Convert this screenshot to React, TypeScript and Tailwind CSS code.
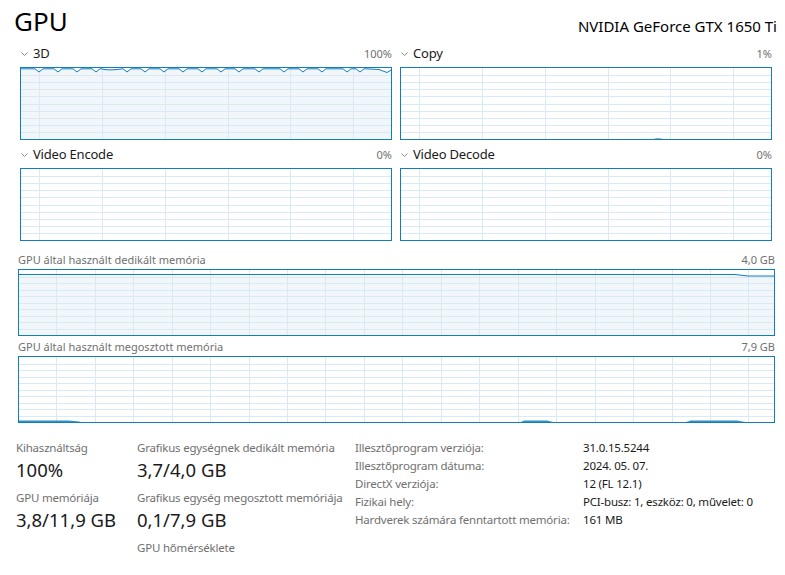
import React from 'react';

const BORDER = '#117dbb';
const GRID = '#d9eaf4';
const FILL = '#f1f6fa';

interface GraphProps {
  width: number;
  height: number;
  cols: number[];
  rows?: number;
  under?: string;
  line?: string;
  area?: string;
}

// inner drawing of a task-manager style graph (fill, grid, data)
const Graph: React.FC<GraphProps> = ({ width, height, cols, rows = 10, under, line, area }) => {
  const w = width - 2;
  const h = height - 2;
  const hLines = Array.from({ length: rows - 1 }, (_, i) => Math.round((h * (i + 1)) / rows) + 0.5);
  return (
    <div className="border border-[#117dbb] bg-white" style={{ width, height }}>
      <svg width={w} height={h} className="block" shapeRendering="crispEdges">
        {under && <path d={under} fill={FILL} shapeRendering="auto" />}
        {hLines.map((y) => (
          <line key={'h' + y} x1={0} x2={w} y1={y} y2={y} stroke={GRID} strokeWidth={1} />
        ))}
        {cols.map((x) => (
          <line key={'v' + x} x1={Math.round(x) + 0.5} x2={Math.round(x) + 0.5} y1={0} y2={h} stroke={GRID} strokeWidth={1} />
        ))}
        {area && <path d={area} fill={BORDER} opacity={0.85} shapeRendering="auto" />}
        {line && <path d={line} fill="none" stroke={BORDER} strokeWidth={1} shapeRendering="auto" />}
      </svg>
    </div>
  );
};

const Chevron = () => (
  <svg width="7" height="4" viewBox="0 0 7 4" className="block">
    <polyline points="0.5,0.5 3.5,3.5 6.5,0.5" fill="none" stroke="#8a8a8a" strokeWidth="1" />
  </svg>
);

const Section: React.FC<{ title: string; value: string; children: React.ReactNode }> = ({ title, value, children }) => (
  <div>
    <div className="flex h-[16px] items-center justify-between">
      <div className="flex items-center">
        <span className="ml-[1px] mr-[5px]">
          <Chevron />
        </span>
        <span className="text-[13px] tracking-[-0.2px] text-[#1a1a1a]">{title}</span>
      </div>
      <span className="text-[11px] text-[#707070]">{value}</span>
    </div>
    <div className="mt-[5px]">{children}</div>
  </div>
);

const smallCols = [18, 81, 144, 207, 269, 332];
const memCols = Array.from({ length: 19 }, (_, i) => 37.3 + i * 38.45);

// 3D usage: pinned near 100% with small dips
const dips = [18, 37, 56, 75, 106, 124, 143, 162, 181, 200, 218, 238, 263, 282, 301, 326, 339];
let zig = 'M0 0.8';
dips.forEach((x) => {
  zig += ` L${x - 4} 0.8 L${x} 4 L${x + 4} 0.8`;
});
zig = zig.replace(`L${106 - 4} 0.8`, 'L80 0.8 Q87 3 ' + (106 - 4) + ' 0.8');
zig += ' L345 0.8 L358 1.5 L366 4.5 L370 2';
const zigFill = zig + ' L370 71 L0 71 Z';

const dedLine = 'M0 4.5 L716 4.5 L729 6 L755 6';
const dedFill = dedLine + ' L755 65 L0 65 Z';

const sharedArea =
  'M0 65 L0 63.6 L50 63.6 L60 64.4 L62 65 Z M502 65 L505 63.6 L528 63.6 L534 65 Z M667 65 L672 63.6 L718 63.6 L726 65 Z';

const copyArea = 'M252 71 Q257 69.5 262 71 Z';

const info: [string, string][] = [
  ['Illesztőprogram verziója:', '31.0.15.5244'],
  ['Illesztőprogram dátuma:', '2024. 05. 07.'],
  ['DirectX verziója:', '12 (FL 12.1)'],
  ['Fizikai hely:', 'PCI-busz: 1, eszköz: 0, művelet: 0'],
  ['Hardverek számára fenntartott memória:', '161 MB'],
];

const Stat: React.FC<{ label: string; value?: string }> = ({ label, value }) => (
  <div className="mb-[6px]">
    <div className="h-[16px] text-[11.5px] leading-[16px] tracking-[-0.2px] text-[#707070] whitespace-nowrap">{label}</div>
    {value && <div className="h-[28px] text-[18.5px] leading-[28px] text-[#1a1a1a] whitespace-nowrap">{value}</div>}
  </div>
);

export default function App() {
  return (
    <div
      className="h-[575px] w-[785px] overflow-hidden bg-white"
      style={{ fontFamily: '"Segoe UI", "Noto Sans", sans-serif' }}
    >
      <div className="flex h-[44px] items-start justify-between pl-[14px] pr-[8px]">
        <div className="mt-[4px] text-[26px] leading-[34px] text-black">GPU</div>
        <div className="mt-[16px] text-[15px] leading-[20px] text-black">NVIDIA GeForce GTX 1650 Ti</div>
      </div>

      <div className="ml-[20px] mt-[2px] grid w-[752px] grid-cols-2 gap-x-[8px] gap-y-[7px]">
        <Section title="3D" value="100%">
          <Graph width={372} height={73} cols={smallCols} under={zigFill} line={zig} />
        </Section>
        <Section title="Copy" value="1%">
          <Graph width={372} height={73} cols={smallCols} area={copyArea} />
        </Section>
        <Section title="Video Encode" value="0%">
          <Graph width={372} height={73} cols={smallCols} />
        </Section>
        <Section title="Video Decode" value="0%">
          <Graph width={372} height={73} cols={smallCols} />
        </Section>
      </div>

      <div className="ml-[18px] mt-[12px] w-[757px]">
        <div className="flex h-[14px] items-center justify-between text-[11px] text-[#707070]">
          <span>GPU által használt dedikált memória</span>
          <span>4,0 GB</span>
        </div>
        <div className="mt-[2px]">
          <Graph width={757} height={67} cols={memCols} under={dedFill} line={dedLine} />
        </div>
        <div className="mt-[4px] flex h-[14px] items-center justify-between text-[11px] text-[#707070]">
          <span>GPU által használt megosztott memória</span>
          <span>7,9 GB</span>
        </div>
        <div className="mt-[2px]">
          <Graph width={757} height={67} cols={memCols} area={sharedArea} />
        </div>
      </div>

      <div className="mt-[17px] flex">
        <div className="ml-[16px] w-[121px]">
          <Stat label="Kihasználtság" value="100%" />
          <Stat label="GPU memóriája" value="3,8/11,9 GB" />
        </div>
        <div className="w-[218px]">
          <Stat label="Grafikus egységnek dedikált memória" value="3,7/4,0 GB" />
          <Stat label="Grafikus egység megosztott memóriája" value="0,1/7,9 GB" />
          <Stat label="GPU hőmérséklete" />
        </div>
        <div className="-mt-[1px]">
          {info.map(([k, v]) => (
            <div key={k} className="flex h-[18px] items-center text-[11.5px] tracking-[-0.2px] whitespace-nowrap">
              <span className="w-[228px] text-[#707070]">{k}</span>
              <span className="text-[#1a1a1a]">{v}</span>
            </div>
          ))}
        </div>
      </div>
    </div>
  );
}
